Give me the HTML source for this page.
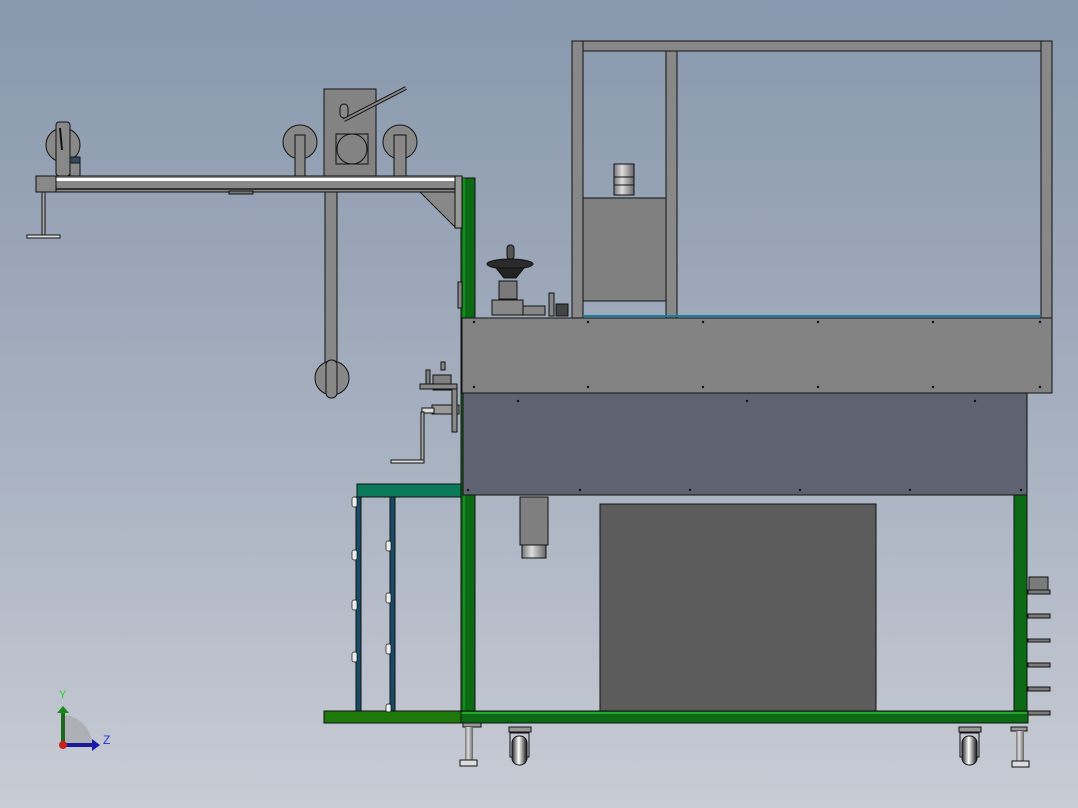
<!DOCTYPE html>
<html><head><meta charset="utf-8"><style>
html,body{margin:0;padding:0;width:1078px;height:808px;overflow:hidden}
svg{display:block}
</style></head><body>
<svg width="1078" height="808" viewBox="0 0 1078 808" xmlns="http://www.w3.org/2000/svg" font-family="Liberation Sans, sans-serif">
<defs>
<linearGradient id="bg" x1="0" y1="0" x2="0" y2="1">
<stop offset="0" stop-color="#8898ad"/><stop offset="0.5" stop-color="#a4aebe"/><stop offset="1" stop-color="#c8ccd5"/>
</linearGradient>
<linearGradient id="cyl" x1="0" y1="0" x2="1" y2="0">
<stop offset="0" stop-color="#777"/><stop offset="0.4" stop-color="#ddd"/><stop offset="1" stop-color="#666"/>
</linearGradient>
<linearGradient id="whl" x1="0" y1="0" x2="1" y2="0">
<stop offset="0" stop-color="#222"/><stop offset="0.45" stop-color="#fff"/><stop offset="1" stop-color="#111"/>
</linearGradient>
</defs>
<rect width="1078" height="808" fill="url(#bg)"/>

<g stroke="#111" stroke-width="1">
<!-- green frame (behind panels) -->
<rect x="461" y="178" width="14" height="542" fill="#0c6a14"/>
<line x1="464" y1="178" x2="464" y2="720" stroke="#25b030"/>
<rect x="1014" y="495" width="13" height="225" fill="#0c6a14"/>

<!-- top glass frame -->
<rect x="572" y="41" width="480" height="10" fill="#888"/>
<rect x="572" y="41" width="11" height="277" fill="#888"/>
<rect x="1041" y="41" width="11" height="277" fill="#888"/>
<rect x="666" y="51" width="11" height="267" fill="#888"/>
<rect x="583" y="198" width="83" height="103" fill="#808080"/>
<rect x="614" y="164" width="20" height="31" fill="url(#cyl)"/>
<line x1="614" y1="177" x2="634" y2="177"/><line x1="614" y1="185" x2="634" y2="185"/>
<line x1="583" y1="316" x2="1041" y2="316" stroke="#1a7fa0" stroke-width="2"/>

<!-- upper gray box -->
<rect x="462" y="318" width="590" height="75" fill="#838383"/>
<!-- dark panel -->
<rect x="463" y="393" width="564" height="102" fill="#5f6270"/>

<rect x="461" y="711" width="567" height="12" fill="#0c6a14"/>
<line x1="461" y1="713" x2="1027" y2="713" stroke="#3ee050"/>
<rect x="324" y="711" width="137" height="12" fill="#1e780a"/>
<rect x="357" y="484" width="104" height="13" fill="#0b7a5a"/>
<rect x="356" y="497" width="5" height="214" fill="#1a4b66"/>
<rect x="390" y="497" width="5" height="214" fill="#1a4b66"/>

<!-- right cabinet -->
<rect x="600" y="504" width="276" height="207" fill="#5c5c5c"/>
<!-- cylinder -->
<rect x="520" y="497" width="28" height="48" fill="#7f7f7f"/>
<rect x="522" y="545" width="24" height="13" fill="url(#cyl)"/>

<!-- right side tabs -->
<rect x="1029" y="577" width="19" height="13" fill="#7a7a7a"/>
<rect x="1028" y="590" width="22" height="4" fill="#7a7a7a"/>
<rect x="1028" y="614" width="22" height="4" fill="#7a7a7a"/>
<rect x="1028" y="639" width="22" height="3" fill="#7a7a7a"/>
<rect x="1028" y="663" width="22" height="4" fill="#7a7a7a"/>
<rect x="1028" y="687" width="22" height="4" fill="#7a7a7a"/>
<rect x="1028" y="711" width="22" height="4" fill="#7a7a7a"/>

<!-- legs and casters -->
<rect x="463" y="723" width="18" height="4" fill="#999"/>
<rect x="465" y="727" width="8" height="36" fill="url(#cyl)" stroke="none"/>
<rect x="460" y="760" width="17" height="6" fill="#ddd"/>
<rect x="1011" y="727" width="16" height="4" fill="#999"/>
<rect x="1016" y="731" width="8" height="33" fill="url(#cyl)" stroke="none"/>
<rect x="1012" y="761" width="17" height="6" fill="#ddd"/>
<rect x="509" y="727" width="22" height="5" fill="#999"/>
<rect x="510" y="733" width="19" height="24" fill="none"/>
<rect x="512" y="736" width="15" height="29" rx="7" fill="url(#whl)"/>
<rect x="959" y="727" width="22" height="5" fill="#999"/>
<rect x="960" y="733" width="19" height="24" fill="none"/>
<rect x="962" y="736" width="15" height="29" rx="7" fill="url(#whl)"/>

<!-- arm -->
<rect x="36" y="176" width="426" height="16" fill="#888"/>
<rect x="56" y="178" width="406" height="3" fill="#fff" stroke="none"/>
<line x1="56" y1="189" x2="462" y2="189" stroke="#333" stroke-width="2"/>
<rect x="36" y="176" width="20" height="16" fill="#888"/>
<polygon points="420,192 456,192 456,228" fill="#888"/>
<rect x="455" y="176" width="7" height="52" fill="#999"/>
<rect x="458" y="282" width="4" height="26" fill="#888"/>
<rect x="229" y="191" width="24" height="3" fill="#777"/>
<rect x="42" y="192" width="3" height="44" fill="#aaa"/>
<rect x="27" y="235" width="33" height="3" fill="#ddd"/>
<rect x="325" y="192" width="12" height="180" fill="#888"/>
<circle cx="332" cy="378" r="17" fill="#888"/>
<rect x="326" y="360" width="11" height="38" rx="5" fill="#888"/>
<circle cx="63" cy="145" r="17" fill="#888"/>
<rect x="56" y="122" width="14" height="54" rx="3" fill="#888"/>
<rect x="70" y="157" width="10" height="19" fill="#888"/>
<rect x="70" y="157" width="10" height="6" fill="#334a60"/>
<path d="M60 128 L62 150" stroke="#111" stroke-width="2"/>

<!-- top mechanism -->
<circle cx="300" cy="142" r="17" fill="#888"/>
<circle cx="400" cy="142" r="17" fill="#888"/>
<rect x="295" y="135" width="10" height="41" fill="#888"/>
<rect x="394" y="135" width="12" height="41" fill="#888"/>
<rect x="324" y="89" width="52" height="87" fill="#838383"/>
<rect x="336" y="134" width="32" height="30" fill="none"/>
<circle cx="352" cy="149" r="15" fill="none"/>
<path d="M344 120 L406 88" stroke="#111" stroke-width="4"/>
<path d="M344 120 L406 88" stroke="#888" stroke-width="2"/>
<rect x="340" y="104" width="8" height="14" rx="4" fill="#888"/>

<!-- handwheel -->
<rect x="507" y="245" width="7" height="14" rx="3" fill="#555"/>
<ellipse cx="510" cy="264" rx="23" ry="5" fill="#2a2a2a"/>
<polygon points="496,268 524,268 516,278 504,278" fill="#222"/>
<rect x="499" y="281" width="18" height="18" fill="#7a7a7a"/>
<rect x="492" y="300" width="31" height="15" fill="#888"/>
<rect x="523" y="306" width="22" height="9" fill="#888"/>
<rect x="549" y="293" width="5" height="23" fill="#888"/>
<rect x="556" y="304" width="12" height="12" fill="#444"/>

<!-- crank -->
<rect x="433" y="375" width="18" height="15" fill="#808080"/>
<rect x="426" y="370" width="4" height="15" fill="#808080"/>
<rect x="420" y="384" width="37" height="5" fill="#888"/>
<rect x="441" y="362" width="4" height="8" fill="#888"/>
<rect x="432" y="405" width="27" height="9" fill="#999"/>
<rect x="452" y="389" width="5" height="43" fill="#888"/>
<rect x="422" y="408" width="12" height="5" fill="#ddd"/>
<rect x="421" y="412" width="3" height="50" fill="#aaa"/>
<rect x="391" y="460" width="33" height="3" fill="#ddd"/>
</g>

<!-- screws -->
<g fill="#111">
<circle cx="474" cy="322" r="1.2"/><circle cx="588" cy="322" r="1.2"/><circle cx="703" cy="322" r="1.2"/><circle cx="818" cy="322" r="1.2"/><circle cx="933" cy="322" r="1.2"/><circle cx="1040" cy="322" r="1.2"/>
<circle cx="474" cy="387" r="1.2"/><circle cx="588" cy="387" r="1.2"/><circle cx="703" cy="387" r="1.2"/><circle cx="818" cy="387" r="1.2"/><circle cx="933" cy="387" r="1.2"/><circle cx="1040" cy="387" r="1.2"/>
<circle cx="518" cy="401" r="1.2"/><circle cx="747" cy="401" r="1.2"/><circle cx="975" cy="401" r="1.2"/>
<circle cx="468" cy="490" r="1.2"/><circle cx="580" cy="490" r="1.2"/><circle cx="690" cy="490" r="1.2"/><circle cx="800" cy="490" r="1.2"/><circle cx="910" cy="490" r="1.2"/><circle cx="1021" cy="490" r="1.2"/>
</g>
<!-- bolts on posts -->
<g fill="#eee" stroke="#111" stroke-width="0.7">
<rect x="352" y="497" width="5" height="10" rx="2"/><rect x="352" y="550" width="5" height="10" rx="2"/><rect x="352" y="600" width="5" height="10" rx="2"/><rect x="352" y="652" width="5" height="10" rx="2"/>
<rect x="386" y="541" width="5" height="10" rx="2"/><rect x="386" y="593" width="5" height="10" rx="2"/><rect x="386" y="644" width="5" height="10" rx="2"/><rect x="386" y="704" width="5" height="8" rx="2"/>
</g>

<!-- axis triad -->
<path d="M63 745 L63 715 A30 30 0 0 1 92 745 Z" fill="#999" opacity="0.5"/>
<rect x="61" y="712" width="4" height="33" fill="#1a6a1a"/>
<polygon points="57,713 63,706 69,713" fill="#1a8a1a"/>
<rect x="63" y="743" width="30" height="4" fill="#1a1a9a"/>
<polygon points="92,739 100,745 92,751" fill="#1a1aaa"/>
<circle cx="63" cy="745" r="4" fill="#cc2020"/>
<text x="59" y="698" font-size="11" fill="#2ad02a">Y</text>
<text x="103" y="744" font-size="12" fill="#2030e0">Z</text>
</svg>
</body></html>
